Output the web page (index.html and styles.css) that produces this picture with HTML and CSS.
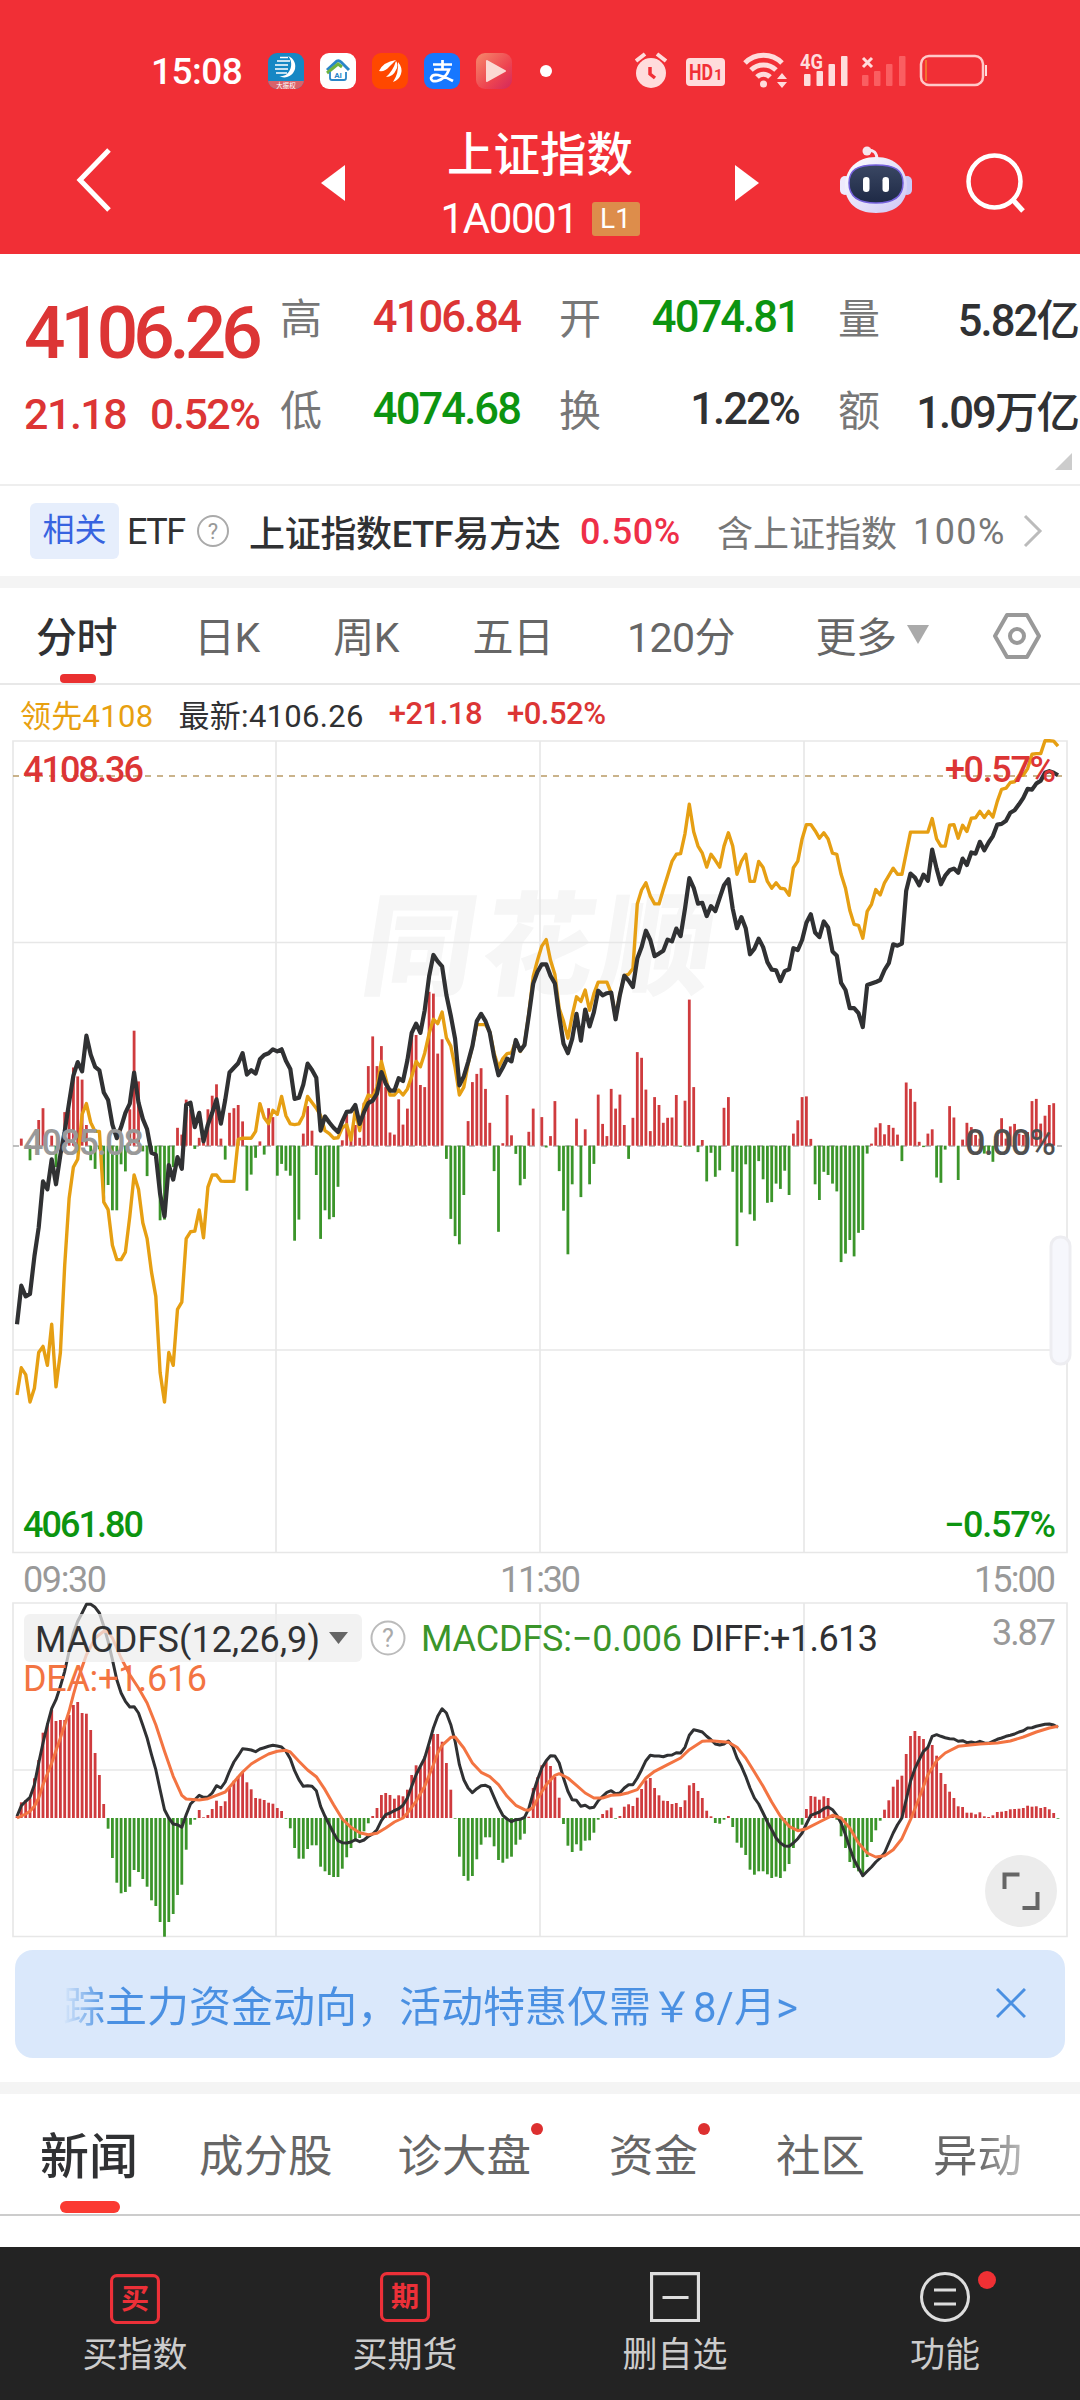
FILE: index.html
```html
<!DOCTYPE html>
<html lang="zh-CN">
<head>
    <meta charset="UTF-8">
    <meta name="viewport" content="width=device-width, initial-scale=1.0">
    <title>上证指数 1A0001</title>
    <link rel="stylesheet" href="styles.css">
</head>
<body>
    <header>
        <div class="status-bar">
            <span class="clock">15:08</span>
            <div class="app-icons">
                <svg viewBox="0 0 36 36"><rect width="36" height="36" rx="9" fill="#1687c4"/><path d="M0 28h36v-1a9 9 0 0 1-9 9H9a9 9 0 0 1-9-9z" fill="#d9626a"/><path d="M20 3a11 11 0 1 1-9 20c11 2 16-13 9-20z" fill="#fff"/><path d="M12 4.500h8M9 8h13M7 12h13M7 16h13M8 20h11" stroke="#fff" stroke-width="1.500"/><text x="18" y="34.500" font-size="6.500" text-anchor="middle" fill="#fff">大振权</text></svg>
                <svg viewBox="0 0 36 36"><rect width="36" height="36" rx="9" fill="#fff"/><path d="M7 17L17 8q2-1 4 1l8 8" fill="none" stroke="#2a86c8" stroke-width="3"/><path d="M7 20l11-9 4 3" fill="none" stroke="#6db33f" stroke-width="3"/><path d="M10 19v6q0 2 2 2h12q2 0 2-2v-6" fill="none" stroke="#2a86c8" stroke-width="1.800"/><text x="18" y="25" font-size="8" font-weight="700" text-anchor="middle" fill="#2a86c8">AI</text></svg>
                <svg viewBox="0 0 36 36"><rect width="36" height="36" rx="9" fill="#ff4800"/><path d="M7 18Q11 9 24 7q-4 4-7 7-4 5-10 4zM14 24q7-6 10-16 3 4 0 9-3 7-10 7zM21 29q6-9 5-20 5 6 3 12-2 6-8 8z" fill="#fff"/></svg>
                <svg viewBox="0 0 36 36"><rect width="36" height="36" rx="9" fill="#1777ff"/><path d="M9 11.500h19M18.500 7v9M10 16.500h15q-3 9-12 11.500-6 1-6-3 1-4 7-3 8 2 15 6" fill="none" stroke="#fff" stroke-width="2.700"/></svg>
                <svg viewBox="0 0 36 36"><defs><linearGradient id="play" x1="0" y1="0" x2="1" y2="1"><stop offset="0" stop-color="#f58a6c"/><stop offset=".6" stop-color="#ee4450"/><stop offset="1" stop-color="#d3285c"/></linearGradient></defs><rect width="36" height="36" rx="9" fill="url(#play)"/><path d="M11 8l18 10-18 10z" fill="#fbd9d3" stroke="#fbd9d3" stroke-width="2" stroke-linejoin="round"/></svg>
            </div>
            <span class="more-dot"></span>
            <svg class="system-icons" viewBox="635 50 354 42" fill="#ffdcdc">
                <circle cx="651" cy="73" r="15"/><path d="M636 61l9-7M666 61l-9-7" stroke="#ffdcdc" stroke-width="4"/><path d="M650 67v7l5 4" fill="none" stroke="#f12f36" stroke-width="3.500"/>
                <rect x="686" y="58" width="39" height="28" rx="4"/><text x="689" y="80" class="hd" textLength="24" lengthAdjust="spacingAndGlyphs">HD</text><text x="714" y="80" class="hd-one">1</text>
                <g fill="none" stroke="#ffdcdc" stroke-width="5"><path d="M745 63a26 26 0 0 1 37 0M751 70a18 18 0 0 1 25 0M757 77a9 9 0 0 1 13 0"/></g><circle cx="763.500" cy="84" r="3.500"/><path d="M777 79h10l-5-6zM777 82h10l-5 6z"/>
                <rect x="804" y="74" width="6.500" height="12" rx="1"/><rect x="816.500" y="71" width="6.500" height="15" rx="1"/><rect x="828.500" y="64" width="6.500" height="22" rx="1"/><rect x="841" y="56" width="6.500" height="30" rx="1"/><text x="800" y="69" class="net" textLength="23" lengthAdjust="spacingAndGlyphs">4G</text>
                <path d="M863 58l9 9M872 58l-9 9" stroke="#ffdcdc" stroke-width="3"/>
                <g fill="#fa5e61"><rect x="862" y="75" width="6.500" height="11" rx="1"/><rect x="874" y="71" width="6.500" height="15" rx="1"/><rect x="886" y="64" width="6.500" height="22" rx="1"/><rect x="899" y="56" width="6.500" height="30" rx="1"/></g>
                <rect x="921" y="56" width="62" height="29" rx="8" fill="none" stroke="#ffc9c9" stroke-width="2.500"/><path d="M926 60v21" stroke="#f28a2e" stroke-width="1.500"/><path d="M985 65h2v11h-2z"/>
            </svg>
        </div>
        <div class="title-bar">
            <svg class="back" viewBox="0 0 36 64"><path d="M33 2L4 32l29 30" fill="none" stroke="#fff" stroke-width="5"/></svg>
            <svg class="switch prev" viewBox="0 0 24 36"><path d="M24 0v36L0 18z" fill="#fff"/></svg>
            <div class="stock">
                <h1>上证指数</h1>
                <p>1A0001 <span class="level">L1</span></p>
            </div>
            <svg class="switch next" viewBox="0 0 24 36"><path d="M0 0v36l24-18z" fill="#fff"/></svg>
            <svg class="robot" viewBox="0 0 72 68">
                <defs>
                    <linearGradient id="head" x1="0" y1="0" x2="1" y2="1"><stop offset="0" stop-color="#fff"/><stop offset="1" stop-color="#cdc6f4"/></linearGradient>
                    <linearGradient id="face" x1="0" y1="0" x2="0" y2="1"><stop offset="0" stop-color="#3a4763"/><stop offset="1" stop-color="#1e2945"/></linearGradient>
                </defs>
                <path d="M27 4q10-1 10 10" fill="none" stroke="#f3e9f4" stroke-width="3"/><circle cx="27" cy="5" r="4.500" fill="#f6e6ee"/>
                <rect x="0" y="30" width="10" height="19" rx="5" fill="#eeeafc"/><rect x="62" y="30" width="10" height="19" rx="5" fill="#c9cbf7"/>
                <path d="M36 11c20 0 31 13 31 29S56 67 36 67 5 56 5 40s11-29 31-29z" fill="url(#head)"/>
                <path d="M36 19c19 0 27 5 27 18s-8 20-27 20-27-7-27-20 8-18 27-18z" fill="url(#face)" stroke="#7561dc" stroke-width="1.500"/>
                <rect x="23" y="31" width="6.500" height="15" rx="3.200" fill="#fff"/><rect x="42.500" y="31" width="6.500" height="15" rx="3.200" fill="#fff"/>
            </svg>
            <svg class="search" viewBox="0 0 60 60"><circle cx="28.500" cy="28.500" r="26" fill="none" stroke="#fff" stroke-width="4.500"/><path d="M47 47l10 11" stroke="#fff" stroke-width="5"/></svg>
        </div>
    </header>

    <section class="quote">
        <div class="quote-price">
            <b>4106.26</b>
            <span>21.18</span><span>0.52%</span>
        </div>
        <dl><dt>高</dt><dd class="up">4106.84</dd><dt>低</dt><dd class="down">4074.68</dd></dl>
        <dl><dt>开</dt><dd class="down">4074.81</dd><dt>换</dt><dd>1.22%</dd></dl>
        <dl><dt>量</dt><dd>5.82亿</dd><dt>额</dt><dd>1.09万亿</dd></dl>
        <i class="corner"></i>
    </section>

    <section class="etf">
        <span class="etf-tag">相关</span>
        <span class="etf-type">ETF</span>
        <svg class="help" viewBox="0 0 34 34"><circle cx="17" cy="17" r="15" fill="none" stroke="#aaa" stroke-width="2"/><text x="17" y="25" font-size="22" text-anchor="middle" fill="#999">?</text></svg>
        <span class="etf-name">上证指数ETF易方达</span>
        <span class="etf-change">0.50%</span>
        <span class="etf-weight">含上证指数</span>
        <span class="etf-percent">100%</span>
        <svg class="arrow" viewBox="0 0 20 34"><path d="M2 2l15 15L2 32" fill="none" stroke="#bbb" stroke-width="3"/></svg>
    </section>

    <nav class="periods">
        <a class="active">分时</a>
        <a>日K</a>
        <a>周K</a>
        <a>五日</a>
        <a>120分</a>
        <a class="more">更多<i></i></a>
        <svg class="setting" viewBox="0 0 48 46"><path d="M14 2h20l12 21-12 21H14L2 23z" fill="none" stroke="#999" stroke-width="4" stroke-linejoin="round"/><circle cx="24" cy="23" r="7" fill="none" stroke="#999" stroke-width="4"/></svg>
    </nav>

    <div class="legend">
        <span class="lead">领先4108</span>
        <span>最新:4106.26</span>
        <span class="up">+21.18</span>
        <span class="up">+0.52%</span>
    </div>

    <svg class="chart" viewBox="0 740 1080 862">
        <text class="watermark" transform="translate(358 986) skewX(-9)" textLength="350">同花顺</text>
        <g class="grid"><path d="M13 741H1067V1552.500H13zM276 741V1552M540 741V1552M804 741V1552"/><path d="M13 942.500H1067M13 1350H1067"/></g>
        <path class="limit" d="M13 776H1062"/>
        <path class="zero" d="M13 1146H1062"/>
        <g id="timeBars"></g>
        <polyline id="leadLine" class="line lead-line"/>
        <polyline id="priceLine" class="line price-line"/>
        <text x="23" y="1155" class="mid" textLength="121">4085.08</text>
        <text x="23" y="782" class="up" textLength="121">4108.36</text>
        <text x="945" y="782" class="up" textLength="111">+0.57%</text>
        <text x="965" y="1155" class="pct" textLength="91">0.00%</text>
        <text x="23" y="1537" class="down" textLength="121">4061.80</text>
        <text x="944" y="1537" class="down" textLength="112">−0.57%</text>
        <g class="time"><text x="23" y="1592" textLength="84">09:30</text><text x="500" y="1592" textLength="81">11:30</text><text x="974" y="1592" textLength="82">15:00</text></g>
        <rect class="handle" x="1051" y="1237" width="19" height="127" rx="9"/>
    </svg>

    <svg class="chart macd" viewBox="0 1602 1080 348">
        <g class="grid"><path d="M13 1603H1067V1936.500H13zM276 1603V1936M540 1603V1936M804 1603V1936M13 1770H1067"/></g>
        <g id="macdBars"></g>
        <polyline id="diffLine" class="line diff-line"/>
        <polyline id="deaLine" class="line dea-line"/>
        <rect class="pill" x="24" y="1614" width="338" height="48" rx="6"/>
        <text x="35" y="1652" textLength="285">MACDFS(12,26,9)</text>
        <path d="M329 1632h19l-9.500 12z" fill="#666"/>
        <circle cx="388" cy="1638" r="16.500" fill="none" stroke="#bbb" stroke-width="2"/><text x="388" y="1647" class="q" text-anchor="middle">?</text>
        <text x="421" y="1651" class="macd-green" textLength="261">MACDFS:−0.006</text>
        <text x="691" y="1651" textLength="187">DIFF:+1.613</text>
        <text x="992" y="1645" class="scale" textLength="64">3.87</text>
        <text x="23" y="1691" class="dea" textLength="184">DEA:+1.616</text>
        <circle cx="1021" cy="1891" r="36" fill="#ececec"/>
        <path d="M1004.500 1889v-14.500h15M1037.500 1892v16h-15" fill="none" stroke="#666" stroke-width="4"/>
    </svg>

    <div class="promo">
        <p>踪主力资金动向，活动特惠仅需￥8/月&gt;</p>
        <svg viewBox="0 0 30 30"><path d="M1 1l28 28M29 1L1 29" stroke="#4a90e2" stroke-width="3"/></svg>
    </div>

    <nav class="news-tabs">
        <a class="active">新闻</a>
        <a>成分股</a>
        <a class="dot">诊大盘</a>
        <a class="dot">资金</a>
        <a class="community">社区</a>
        <a class="fade">异动</a>
    </nav>

    <footer>
        <a class="buy"><svg viewBox="0 0 48 48"><rect x="1.500" y="1.500" width="45" height="45" rx="5" fill="none" stroke="#ec3038" stroke-width="3"/><text x="24" y="34" font-size="27" font-weight="700" text-anchor="middle" fill="#ec3038">买</text></svg>买指数</a>
        <a><svg viewBox="0 0 48 48"><rect x="1.500" y="1.500" width="45" height="45" rx="5" fill="none" stroke="#ec3038" stroke-width="3"/><text x="24" y="34" font-size="27" font-weight="700" text-anchor="middle" fill="#ec3038">期</text></svg>买期货</a>
        <a><svg viewBox="0 0 48 48"><path d="M1.500 1.500h45v45h-45zM12 24.500h25" fill="none" stroke="#ddd" stroke-width="3"/></svg>删自选</a>
        <a class="func"><svg viewBox="0 0 50 50"><circle cx="25" cy="25" r="23.500" fill="none" stroke="#ddd" stroke-width="3"/><path d="M14 18h22M14 32h22" stroke="#ddd" stroke-width="3"/></svg>功能</a>
    </footer>
    <script src="chart.js"></script>
</body>
</html>
```
FILE: chart.js
```js
// one value per trading minute, heights above the zero line
const price = [
    -500,-392,-422,-415,-310,-229,-100,-122,-38,-108,-25,40,121,196,234,208,308,255,221,211,
    149,128,59,21,52,92,118,205,121,75,46,-20,-25,-135,-198,-54,-95,-32,-65,115,
    120,52,92,12,59,92,130,62,128,205,218,231,259,199,211,202,242,254,259,270,
    264,270,238,215,131,134,171,230,212,190,42,82,65,50,38,68,95,96,114,61,
    94,119,126,146,206,174,154,154,189,181,239,316,342,316,379,474,534,516,502,422,
    364,299,169,194,234,279,349,369,349,316,249,197,219,244,236,296,266,282,364,454,
    487,508,508,476,454,364,286,259,299,369,294,381,334,374,434,421,427,429,354,422,
    476,462,444,524,556,602,576,531,538,546,577,572,608,587,664,749,722,678,680,643,
    671,657,694,729,746,664,609,640,609,536,552,580,556,514,493,491,461,489,494,553,
    548,576,624,648,597,584,628,611,544,532,456,436,385,385,371,332,450,454,458,464,
    492,511,564,560,566,714,762,751,729,759,742,829,776,732,756,771,776,764,804,786,
    821,818,851,827,849,867,899,901,910,932,939,956,974,999,997,1014,1022,1044,1049,1044,1037
];
const lead = [
    -698,-622,-641,-718,-679,-579,-562,-615,-500,-675,-579,-335,-148,-60,-38,88,118,65,40,40,
    -158,-179,-279,-319,-319,-298,-198,-82,-122,-216,-260,-354,-422,-635,-718,-579,-615,-458,-438,-260,
    -241,-239,-180,-258,-116,-82,-82,-99,-100,-100,-100,18,21,21,21,40,118,78,62,99,
    88,138,84,61,59,61,84,138,121,105,84,42,34,21,22,50,59,16,99,42,
    114,142,136,164,236,189,142,142,156,142,159,194,236,221,259,314,354,342,374,302,
    279,219,142,164,229,279,339,339,339,319,259,219,244,258,260,294,264,284,369,474,
    519,559,577,519,479,384,349,301,364,417,404,436,379,426,458,458,458,427,364,424,
    476,480,496,677,716,736,699,677,677,717,756,796,816,818,874,956,879,839,819,780,
    816,799,780,839,876,839,760,796,816,740,740,796,779,740,721,736,721,719,701,778,
    797,859,899,899,882,861,876,859,819,816,760,721,659,620,617,581,656,676,717,702,
    736,756,777,760,760,819,878,878,878,878,878,916,859,839,839,897,899,861,897,880,
    917,918,936,919,936,920,964,998,1001,1017,1019,1036,1038,1056,1096,1098,1098,1134,1134,1133,1119
];
const strength = [
    0,20,0,-41,0,72,105,0,28,-60,0,94,100,219,194,185,58,-41,-65,-10,
    -148,-110,-181,-181,-52,-72,102,322,180,-16,-85,-10,-35,-209,-207,-85,-60,50,31,129,
    102,-9,22,9,102,140,172,20,-39,92,105,114,68,-126,-81,-34,12,-25,105,80,
    -84,-51,-70,-84,-266,-207,34,111,42,-82,-261,-181,-206,-200,-115,15,88,20,58,22,
    120,223,306,223,279,164,37,31,130,59,104,314,310,170,164,431,426,258,298,-37,
    -205,-253,-276,-138,69,178,201,217,159,64,-71,-241,7,142,29,-23,-111,-93,39,104,
    0,80,-5,27,125,-71,-182,-304,-108,76,-144,46,-108,-51,143,61,27,159,104,143,
    58,-37,78,262,246,157,41,136,114,64,78,79,142,-3,126,409,164,-18,16,-100,
    -20,-87,-69,106,136,-73,-281,-187,-52,-192,-210,-43,-94,-160,-158,-106,-121,-70,-138,34,
    71,136,138,19,-108,-152,-73,-82,-106,-128,-326,-302,-264,-310,-244,-236,-22,6,51,63,
    32,58,50,31,-43,177,159,123,11,-4,34,46,-89,-104,-11,111,79,-96,17,64,
    52,30,20,-22,-25,-45,30,77,20,54,61,34,30,38,125,131,62,84,114,119,0
];
const macd = [
    5,47,54,59,119,174,256,284,324,291,294,294,309,339,348,315,313,264,195,129,
    42,-32,-120,-194,-226,-222,-206,-156,-162,-183,-206,-247,-264,-312,-356,-312,-288,-231,-200,-95,
    -20,-5,24,2,9,27,52,36,50,90,112,125,138,107,86,60,58,54,46,43,
    30,21,-2,-31,-90,-122,-122,-93,-82,-82,-146,-160,-171,-177,-177,-152,-118,-90,-70,-60,
    -40,-16,6,30,69,75,69,58,68,65,85,129,158,152,185,215,252,252,229,165,
    85,-2,-116,-174,-188,-174,-124,-80,-58,-58,-85,-126,-134,-122,-116,-80,-65,-47,4,90,
    122,158,170,156,123,61,-18,-83,-102,-79,-98,-68,-67,-44,-5,12,23,31,-2,6,
    34,41,36,61,87,113,120,90,68,52,51,42,45,33,53,98,105,81,60,22,
    5,-15,-17,-5,6,-27,-74,-89,-111,-155,-170,-160,-160,-169,-180,-176,-180,-160,-138,-90,
    -37,-20,27,66,64,55,65,60,4,-5,-55,-90,-132,-150,-160,-175,-117,-72,-37,-8,
    25,53,94,115,127,192,246,261,246,237,215,219,187,135,102,79,60,35,33,16,
    16,11,17,5,3,8,18,19,21,26,27,28,30,37,34,35,30,33,26,15,-2
];
const diff = [
    5,37,50,62,100,165,225,280,328,355,395,440,500,555,590,615,641,641,632,615,
    575,530,475,415,375,350,333,334,315,278,240,190,145,85,25,0,-18,-20,-28,10,
    42,55,68,62,63,75,97,90,108,140,168,187,208,206,204,199,207,211,215,218,
    216,213,200,178,142,115,95,97,95,82,35,5,-20,-45,-68,-74,-75,-72,-65,-71,
    -66,-55,-48,-35,-8,10,15,22,28,38,60,95,130,155,180,225,270,305,328,315,
    280,230,160,115,90,76,88,97,98,92,62,32,8,-3,-11,-5,-4,2,28,75,
    115,150,172,187,186,165,120,80,55,53,35,38,30,32,52,65,77,82,73,75,
    90,100,100,120,145,172,188,186,186,184,188,189,196,195,212,248,265,262,258,245,
    235,222,219,222,231,215,180,155,125,90,60,42,15,-12,-35,-60,-75,-84,-85,-75,
    -62,-45,-18,8,13,18,28,33,25,8,-15,-50,-90,-125,-150,-173,-160,-147,-132,-120,
    -105,-75,-45,-20,0,55,110,148,175,200,212,245,250,245,241,238,237,230,232,226,
    228,225,230,225,224,230,236,240,245,248,252,258,262,270,271,275,278,281,282,279,272
];
// [minute, value]
const dea = [
    [0,0],[2,12],[3,20],[4,35],[5,60],[6,100],[8,165],[10,240],[12,320],[13,370],[14,415],[16,490],[18,540],[20,560],[21,558],
    [22,540],[24,480],[26,430],[28,390],[30,345],[32,280],[34,200],[36,125],[38,68],[39,57],[42,54],[44,58],[46,68],[48,78],
    [50,108],[52,138],[54,162],[56,178],[58,192],[60,200],[62,203],[63,198],[65,170],[67,144],[69,124],[71,85],[73,40],[75,-3],
    [77,-28],[79,-44],[81,-50],[83,-46],[85,-30],[87,-12],[89,0],[90,15],[92,50],[94,95],[96,160],[97,195],[98,218],[100,242],
    [101,243],[103,210],[105,165],[107,137],[109,124],[111,100],[113,65],[115,38],[117,25],[118,23],[119,32],[120,58],[122,100],
    [124,128],[125,133],[127,120],[129,98],[131,75],[133,60],[135,60],[137,68],[139,70],[141,76],[143,85],[145,120],[147,140],
    [150,160],[153,180],[155,205],[158,230],[160,232],[164,227],[166,212],[168,180],[170,138],[172,95],[174,48],[176,5],
    [178,-25],[180,-38],[182,-32],[185,-12],[188,8],[190,0],[192,-30],[194,-75],[196,-105],[198,-117],[200,-113],[202,-95],
    [204,-62],[206,-5],[208,60],[210,130],[212,172],[214,195],[217,215],[222,222],[226,225],[229,231],[232,243],[235,258],[238,270],[240,275]
];

const x = i => 17 + i * 4.3375;

function drawLine(id, points, zero, unit) {
    document.getElementById(id).setAttribute('points',
        points.map(([i, v]) => x(i).toFixed(1) + ',' + (zero - v / unit).toFixed(1)).join(' '));
}

function drawBars(id, values, zero, unit) {
    document.getElementById(id).innerHTML = values.map((v, i) => {
        const h = Math.abs(v) / unit;
        return v ? `<rect class="${v > 0 ? 'bar-up' : 'bar-down'}" x="${(x(i) - 1.4).toFixed(1)}" y="${(v > 0 ? zero - h : zero).toFixed(1)}" width="2.8" height="${h.toFixed(1)}"/>` : '';
    }).join('');
}

drawBars('timeBars', strength, 1145.700, 2.8);
drawLine('leadLine', lead.map((v, i) => [i, v]), 1145.700, 2.8);
drawLine('priceLine', price.map((v, i) => [i, v]), 1145.700, 2.8);
drawBars('macdBars', macd, 1818, 3);
drawLine('diffLine', diff.map((v, i) => [i, v]), 1818, 3);
drawLine('deaLine', dea, 1818, 3);
```
FILE: styles.css
```css
* { box-sizing: border-box; }
body { margin: 0; width: 1080px; height: 2400px; overflow: hidden; background: #fff; color: #303133; font-family: Roboto, "Noto Sans CJK SC", sans-serif; display: flex; flex-direction: column; }
svg { display: block; flex: none; }
h1, p, dl, dd { margin: 0; }
.up { color: #dc3535; fill: #dc3535; }
.down { color: #0c9410; fill: #0c9410; }

header { height: 254px; flex: none; background: #f12f36; color: #fff; }
.status-bar { height: 112px; padding: 30px 0 0 151px; display: flex; align-items: center; }
.clock { width: 117px; font-size: 37px; font-weight: 500; letter-spacing: -0.5px; white-space: nowrap; }
.app-icons { display: flex; gap: 16px; }
.app-icons svg { width: 36px; height: 36px; }
.more-dot { width: 12px; height: 12px; margin: 0 83px 0 28px; border-radius: 50%; background: #fff; }
.system-icons { width: 354px; height: 42px; }
.hd { font-size: 22px; font-weight: 700; fill: #f12f36; }
.hd-one { font-size: 15px; font-weight: 700; fill: #f12f36; }
.net { font-size: 21px; font-weight: 700; paint-order: stroke; stroke: #f12f36; stroke-width: 3px; }

.title-bar { height: 142px; display: flex; align-items: center; padding-left: 76px; }
.back { width: 36px; height: 64px; margin-top: -6px; }
.switch { width: 24px; height: 36px; }
.prev { margin-left: 209px; }
.stock { width: 390px; text-align: center; }
.stock h1 { font-size: 46.5px; font-weight: 500; line-height: 60px; margin-top: 11px; }
.stock p { font-size: 42px; line-height: 68px; letter-spacing: -1.4px; white-space: nowrap; display: flex; justify-content: center; align-items: center; gap: 14px; }
.level { width: 48px; height: 34px; background: #dd8d4b; border-radius: 3px; font-size: 28px; line-height: 34px; letter-spacing: 0; }
.robot { width: 72px; height: 68px; margin: -6px 0 0 81px; }
.search { width: 60px; height: 60px; margin-left: 54px; }

.quote { height: 232px; flex: none; position: relative; display: flex; border-bottom: 2px solid #eee; padding-top: 17px; }
.quote-price { flex: none; width: 280px; padding: 19px 0 0 24px; color: #dc3535; white-space: nowrap; }
.quote-price b { display: block; font-size: 73px; line-height: 87px; font-weight: 500; letter-spacing: -5.1px; }
.quote-price span { display: inline-block; width: 126px; font-size: 43px; font-weight: 500; line-height: 74px; letter-spacing: -1.5px; }
.quote dl { flex: none; display: grid; grid-template-columns: 42px 199px; grid-template-rows: 92px 92px; align-items: center; width: 279px; font-size: 43.5px; }
.quote dt { font-size: 42px; color: #777; padding-bottom: 3px; }
.quote dd { font-weight: 500; text-align: right; letter-spacing: -1.9px; white-space: nowrap; padding: 1px 1px 0 0; }
.corner { position: absolute; right: 8px; bottom: 14px; width: 0; height: 0; border-top: 17px solid transparent; border-right: 17px solid #ccc; }

.etf { height: 90px; flex: none; display: flex; align-items: center; padding-left: 30px; font-size: 36px; white-space: nowrap; }
.etf-tag { width: 89px; height: 56px; line-height: 54px; text-align: center; background: #e6eefc; color: #3763e0; font-size: 32px; border-radius: 6px; }
.etf-type { margin-left: 8px; width: 69px; letter-spacing: -1.5px; padding-top: 2px; }
.help { width: 34px; height: 34px; }
.etf-name { width: 331px; margin-left: 19px; font-weight: 500; letter-spacing: -0.3px; }
.etf-change { width: 137px; color: #ee2f48; font-weight: 500; letter-spacing: 0.6px; padding-top: 2px; }
.etf-weight { width: 196px; color: #777; }
.etf-percent { width: 110px; color: #777; letter-spacing: 1.4px; padding-top: 2px; }
.arrow { width: 20px; height: 34px; }

.periods { height: 109px; flex: none; display: flex; align-items: center; border-top: 12px solid #f4f4f4; border-bottom: 2px solid #e8e8e8; padding: 0 0 3px 36px; font-size: 41px; color: #666; white-space: nowrap; }
.periods a { position: relative; margin-right: 73.5px; letter-spacing: -0.5px; }
.periods .active { color: #303133; font-weight: 500; margin-right: 77px; }
.periods .active::after { content: ""; position: absolute; left: 24px; bottom: -19px; width: 36px; height: 9px; border-radius: 4px; background: #ea3030; }
.periods .more { display: flex; align-items: center; gap: 10px; margin: 0 64px 0 7px; }
.more i { border: 11px solid transparent; border-top: 19px solid #aaa; border-bottom: 0; }
.setting { width: 48px; height: 46px; margin-top: 3px; }

.legend { height: 55px; flex: none; display: flex; align-items: center; gap: 25px; padding: 1px 0 0 20px; font-size: 31px; white-space: nowrap; letter-spacing: 0.3px; }
.legend .lead { color: #e8a010; }
.legend .up { font-weight: 500; letter-spacing: -0.5px; }

.chart { width: 1080px; height: 862px; overflow: visible; font-size: 36px; font-weight: 500; fill: #303133; }
.chart text { white-space: pre; }
.chart .up { fill: #dc3535; }
.chart .down { fill: #0c9410; }
.macd { height: 348px; font-weight: 400; }
.grid path { fill: none; stroke: #e7e7e7; stroke-width: 1.6; }
.watermark { font-size: 112px; font-weight: 900; fill: #f6f6f6; }
.limit { stroke: #b99b66; stroke-width: 1.6; stroke-dasharray: 6 6; }
.zero { stroke: #aaa; stroke-width: 1.5; stroke-dasharray: 6 6; }
.line { fill: none; stroke-linejoin: round; }
.lead-line { stroke: #e69f13; stroke-width: 3.4; }
.price-line { stroke: #303133; stroke-width: 4.2; }
.diff-line { stroke: #303133; stroke-width: 3; }
.dea-line { stroke: #f37442; stroke-width: 3; }
.bar-up { fill: #cf3b3e; }
.bar-down { fill: #3b952a; }
.chart .mid, .chart .scale, .time { fill: #999; }
.time { font-weight: 400; }
.chart .pct { fill: #505050; }
.handle { fill: #f6f7fc; stroke: #ededf1; stroke-width: 3; }
.pill { fill: #ededed; fill-opacity: .72; }
.q { font-size: 25px; fill: #aaa; }
.macd-green { fill: #3b952a; }
.dea { fill: #f37442; }

.promo { height: 108px; flex: none; margin: 0 15px 24px; padding: 0 39px 2px 48px; background: #dae8fb; border-radius: 18px; display: flex; align-items: center; justify-content: space-between; color: #4a90e2; font-size: 42px; }
.promo p { background: linear-gradient(90deg, #dae8fb, #4a90e2 42px); -webkit-background-clip: text; background-clip: text; color: transparent; white-space: nowrap; }
.promo svg { width: 30px; height: 30px; }

.news-tabs { height: 134px; flex: none; display: flex; align-items: center; border-top: 12px solid #f4f4f4; border-bottom: 2px solid #ccc; padding: 0 0 3px 40px; font-size: 44.5px; color: #666; white-space: nowrap; }
.news-tabs a { position: relative; margin-right: 78px; }
.news-tabs a:nth-child(2) { margin-right: 65px; }
.news-tabs .active { font-size: 49px; font-weight: 500; color: #303133; margin-right: 61px; }
.news-tabs .active::after { content: ""; position: absolute; left: 20px; bottom: -25px; width: 60px; height: 12px; border-radius: 6px; background: #fb3a32; }
.news-tabs .dot::after { content: ""; position: absolute; right: -12px; top: 3px; width: 12px; height: 12px; border-radius: 50%; background: #dd3030; }
.news-tabs .community { margin-right: 68px; }
.news-tabs .fade { margin: 0; background: linear-gradient(90deg, #666 50%, #bbb); -webkit-background-clip: text; background-clip: text; color: transparent; }

footer { height: 153px; flex: none; margin-top: 31px; background: #232323; display: grid; grid-template-columns: repeat(4, 1fr); color: #ccc; font-size: 35px; }
footer a { position: relative; display: flex; flex-direction: column; align-items: center; padding-top: 25px; line-height: 68px; }
footer svg { width: 50px; height: 50px; }
footer .buy svg { position: relative; top: 2px; }
footer .func::after { content: ""; position: absolute; left: 168px; top: 24px; width: 18px; height: 18px; border-radius: 50%; background: #f03034; }
```
